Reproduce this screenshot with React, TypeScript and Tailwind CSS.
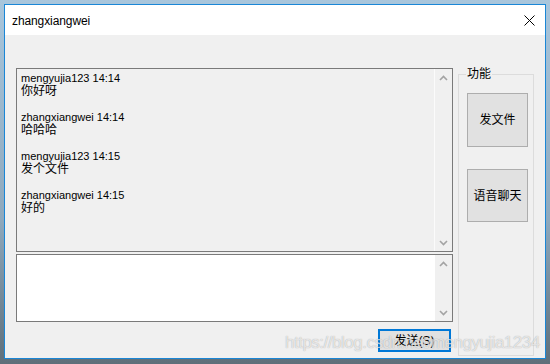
import React from "react";

const FONT = { fontFamily: '"Liberation Sans", "Noto Sans CJK SC", sans-serif' };

function Chevron({ up }: { up?: boolean }) {
  return (
    <svg width="9" height="6" viewBox="0 0 9 6">
      {up ? (
        <polyline points="1,5 4.5,1.5 8,5" fill="none" stroke="#a3a3a3" strokeWidth="1.6" />
      ) : (
        <polyline points="1,1 4.5,4.5 8,1" fill="none" stroke="#a3a3a3" strokeWidth="1.6" />
      )}
    </svg>
  );
}

function ScrollBar({ className }: { className: string }) {
  return (
    <div className={className}>
      <div className="h-[17px] flex items-center justify-center">
        <Chevron up />
      </div>
      <div className="h-[17px] flex items-center justify-center">
        <Chevron />
      </div>
    </div>
  );
}

const messages = [
  { who: "mengyujia123 14:14", text: "你好呀" },
  { who: "zhangxiangwei 14:14", text: "哈哈哈" },
  { who: "mengyujia123 14:15", text: "发个文件" },
  { who: "zhangxiangwei 14:15", text: "好的" },
];

export default function App() {
  return (
    <div
      className="relative w-[550px] h-[364px] overflow-hidden pl-[4px] pt-[4px] bg-[linear-gradient(180deg,#a9c6dc_0%,#8fa9bd_60%,#5f6f7a_100%)]"
      style={FONT}
    >
      <div className="w-[542px] h-[355px] border border-[#1a86d6] bg-[#f0f0f0] flex flex-col">
        {/* title bar */}
        <div className="h-[30px] bg-white flex items-center justify-between pl-[7px] shrink-0">
          <span className="text-[12px] leading-[14px] text-black tracking-[-0.1px] mt-[1px]">zhangxiangwei</span>
          <svg width="11" height="11" viewBox="0 0 11 11" className="mr-[10px]">
            <line x1="0.5" y1="0.5" x2="10.5" y2="10.5" stroke="#000" strokeWidth="1" />
            <line x1="10.5" y1="0.5" x2="0.5" y2="10.5" stroke="#000" strokeWidth="1" />
          </svg>
        </div>

        {/* body */}
        <div className="flex-1 flex px-[11px] gap-[5px]">
          {/* left column */}
          <div className="w-[437px] flex flex-col pt-[33px]">
            <div className="h-[184px] border border-[#7a7a7a] bg-[#f0f0f0] flex">
              <div className="flex-1 pl-[4px] pt-[3px] text-black">
                {messages.map((m, i) => (
                  <div key={i} className="mb-[13px]">
                    <div className="text-[11px] leading-[13px] text-[#000]">{m.who}</div>
                    <div className="text-[12px] leading-[13px]">{m.text}</div>
                  </div>
                ))}
              </div>
              <ScrollBar className="w-[18px] border-l border-[#fbfbfb] flex flex-col justify-between" />
            </div>
            <div className="mt-[2px] h-[68px] border border-[#7a7a7a] bg-white flex">
              <div className="flex-1" />
              <ScrollBar className="w-[17px] bg-[#f0f0f0] flex flex-col justify-between" />
            </div>
            <div className="flex justify-end mt-[7px]">
              <button className="mr-[2px] w-[73px] h-[23px] border-2 border-[#0078d7] bg-[#e1e1e1] flex items-center justify-center text-[12px] leading-[14px] text-black">
                发送(S)
              </button>
            </div>
          </div>

          {/* right column */}
          <div className="w-[76px] pt-[32px]">
            <fieldset className="h-[289px] border border-[#dcdcdc]">
              <legend className="ml-[7px] px-[1px] text-[12px] leading-[14px] text-black">功能</legend>
              <div className="flex flex-col pl-[8px] pt-[12px]">
                <button className="w-[61px] h-[54px] border border-[#adadad] bg-[#e1e1e1] flex items-center justify-center text-[12px] leading-[14px] text-black">
                  发文件
                </button>
                <button className="mt-[22px] w-[61px] h-[53px] border border-[#adadad] bg-[#e1e1e1] flex items-center justify-center text-[12px] leading-[14px] text-black">
                  语音聊天
                </button>
              </div>
            </fieldset>
          </div>
        </div>
      </div>

      {/* watermark */}
      <div className="absolute left-[285px] top-[333px] text-[17px] leading-[20px] tracking-[-0.5px] text-white/70 [text-shadow:0_0_1px_rgba(0,0,0,0.35)] pointer-events-none whitespace-nowrap">
        https://blog.csdn.net/mengyujia1234
      </div>
    </div>
  );
}
